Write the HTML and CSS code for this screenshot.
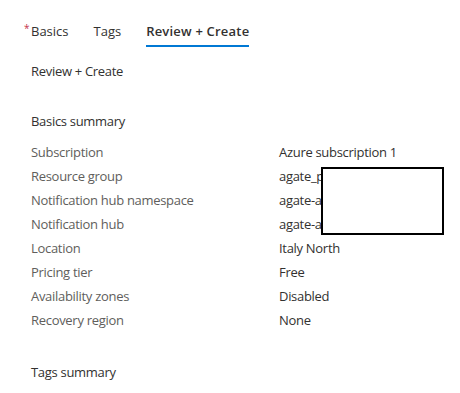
FILE: index.html
```
<!DOCTYPE html>
<html lang="en">
<head>
	<meta charset="UTF-8">
	<title>Create Notification Hub - Review + Create</title>
	<link rel="stylesheet" href="styles.css">
</head>

<body>

<nav class="tabs">
	<span class="tab required">Basics</span>
	<span class="tab">Tags</span>
	<span class="tab active">Review + Create</span>
</nav>

<main class="content">
	<h2 class="subtitle">Review + Create</h2>

	<h3 class="section-title">Basics summary</h3>
	<div class="summary">
		<span class="label">Subscription</span>
		<span class="value">Azure subscription 1</span>
		<span class="label">Resource group</span>
		<span class="value">agate_p</span>
		<span class="label">Notification hub namespace</span>
		<span class="value">agate-a</span>
		<span class="label">Notification hub</span>
		<span class="value">agate-a</span>
		<span class="label">Location</span>
		<span class="value">Italy North</span>
		<span class="label">Pricing tier</span>
		<span class="value">Free</span>
		<span class="label">Availability zones</span>
		<span class="value">Disabled</span>
		<span class="label">Recovery region</span>
		<span class="value">None</span>
	</div>

	<h3 class="section-title tags-title">Tags summary</h3>
</main>

<div class="redacted"></div>

</body>
</html>
```

FILE: styles.css
```
:root {
	--text: #323130;
	--muted: #605e5c;
	--accent: #0078d4;
	--required: #c4314b;
}

body {
	margin: 0;
	background: #fff;
	color: var(--text);
	font-family: 'Segoe UI', 'Open Sans', sans-serif;
	font-size: 13px;
}

.tabs {
	display: flex;
	gap: 25px;
	padding: 20px 0 0 31px;
}

.tab {
	position: relative;
	line-height: 22px;
	padding-bottom: 3px;
	border-bottom: 2px solid transparent;
}

.tab.required::before {
	content: '*';
	position: absolute;
	left: -7px;
	top: -3px;
	color: var(--required);
	font-size: 10px;
}

.tab.active {
	font-weight: 600;
	letter-spacing: 0.2px;
	border-bottom-color: var(--accent);
}

.content {
	padding-left: 31px;
	letter-spacing: -0.3px;
}

.subtitle,
.section-title {
	margin: 0;
	font-size: 13px;
	font-weight: 400;
	line-height: 20px;
}

.subtitle {
	margin-top: 14px;
}

.section-title {
	margin-top: 30px;
}

.summary {
	display: grid;
	grid-template-columns: 248px 1fr;
	grid-auto-rows: 24px;
	line-height: 24px;
	margin-top: 9px;
}

.label {
	color: var(--muted);
}

.value {
	color: var(--text);
}

/* box drawn over the private values */
.redacted {
	position: absolute;
	left: 321px;
	top: 167px;
	width: 119px;
	height: 64px;
	border: 2px solid #000;
	background: #fff;
}
```
